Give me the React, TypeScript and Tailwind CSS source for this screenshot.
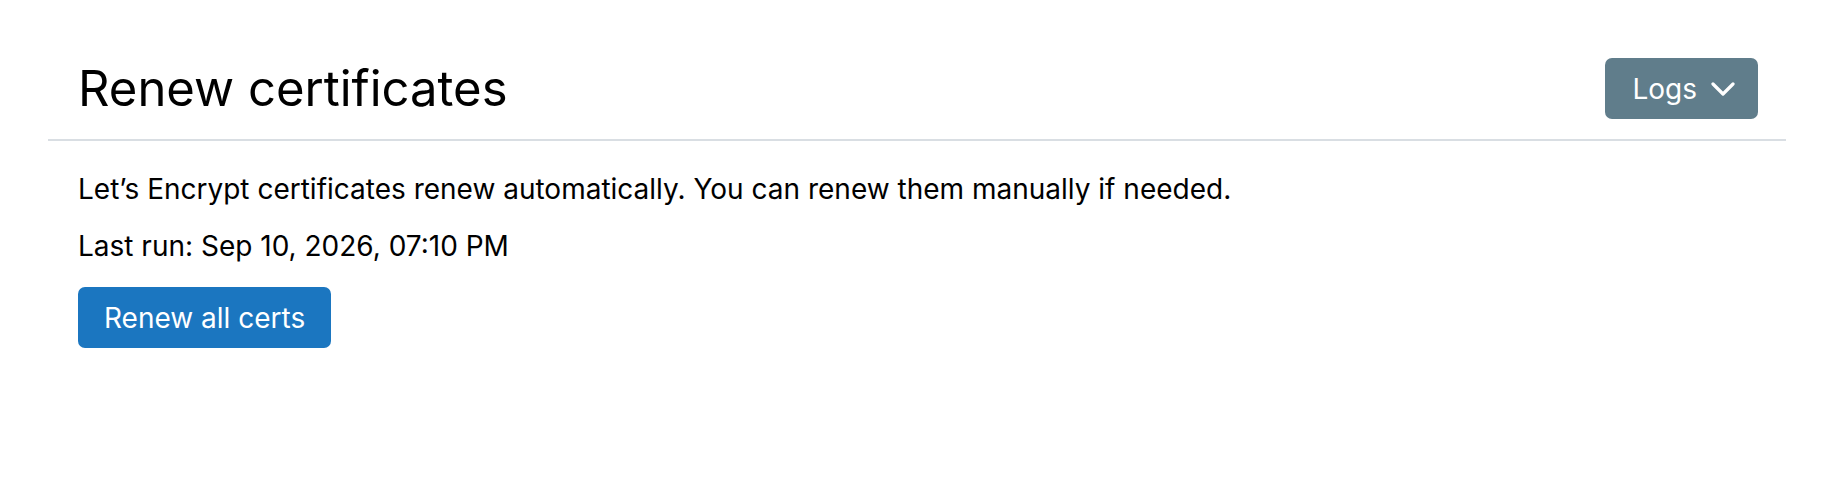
import React from "react";

export default function App() {
  return (
    <div className="min-h-[478px] w-full bg-white text-black" style={{ fontFamily: "Inter, 'Noto Sans', sans-serif" }}>
      <div className="mx-[48px] pt-[58px]">
        <div className="flex items-center justify-between pl-[30px] pr-[28px] pb-[20px] border-b-2 border-[#d9dee3]">
          <h1 className="text-[49px] leading-[61px] font-normal tracking-normal">Renew certificates</h1>
          <button className="flex h-[61px] items-center gap-[14px] rounded-[7px] bg-[#607d8b] pl-[27px] pr-[23px] text-[28px] text-white">
            <span>Logs</span>
            <svg width="24" height="16" viewBox="0 0 24 16" fill="none" stroke="currentColor" strokeWidth="3.2" strokeLinecap="round" strokeLinejoin="round">
              <path d="M2 3 L12 13 L22 3" />
            </svg>
          </button>
        </div>
        <div className="pl-[30px] pr-[28px] pt-[27px]">
          <p className="text-[28px] leading-[42px]">Let’s Encrypt certificates renew automatically. You can renew them manually if needed.</p>
          <p className="mt-[15px] text-[28px] leading-[42px]">Last run: Sep 10, 2026, 07:10 PM</p>
          <button className="mt-[20px] h-[61px] rounded-[7px] bg-[#1b76c0] px-[26px] text-[28px] text-white">Renew all certs</button>
        </div>
      </div>
    </div>
  );
}
